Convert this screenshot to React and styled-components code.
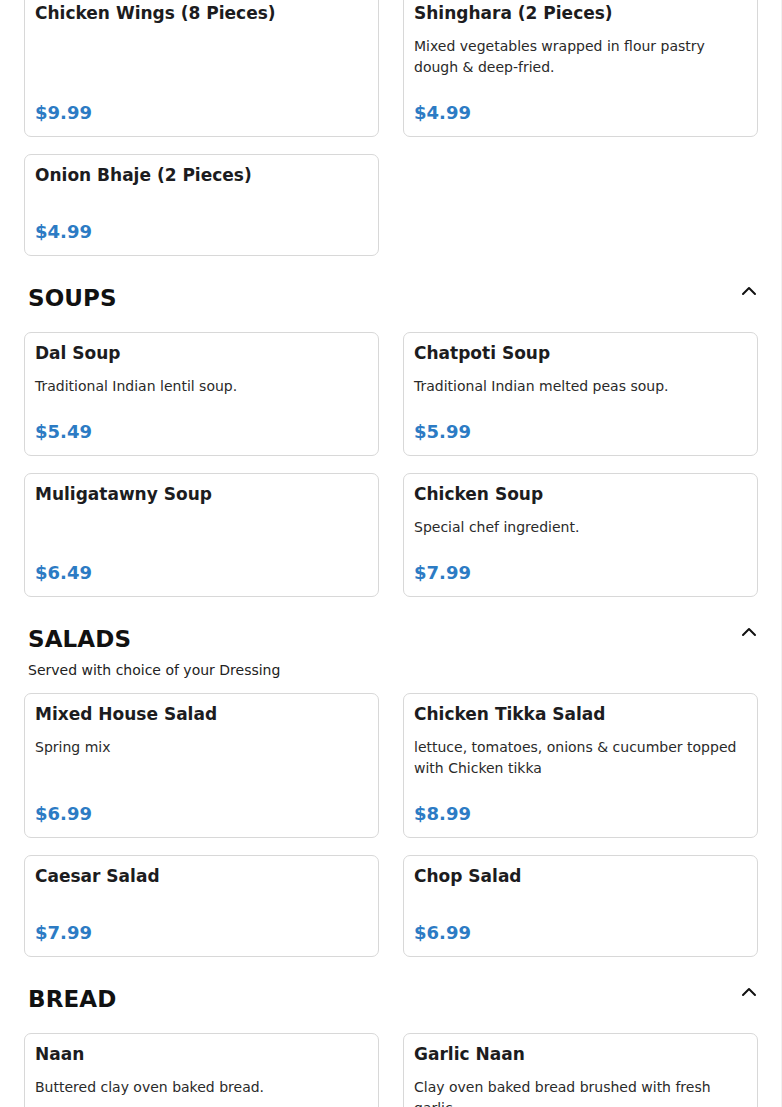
import React from 'react';
import styled, { createGlobalStyle } from 'styled-components';
import { ChevronUp } from 'lucide-react';

const GlobalStyle = createGlobalStyle`
  html, body {
    margin: 0;
    padding: 0;
    background: #fff;
    font-family: "DejaVu Sans", Verdana, sans-serif;
  }
  * { box-sizing: border-box; }
`;

const Page = styled.div`
  height: 100vh;
  overflow: hidden;
  border-right: 1px solid #f1f1f1;
`;

const Menu = styled.div`
  margin-top: -8px;
  padding: 0 23px 40px 24px;
`;

const Section = styled.section`
  margin-top: ${p => (p.first ? '0' : '23px')};
`;

const SectionHead = styled.div`
  display: flex;
  justify-content: space-between;
  align-items: flex-start;
  padding-left: 4px;
  margin-bottom: ${p => (p.hasNote ? '7px' : '20px')};
`;

const SectionTitle = styled.h2`
  margin: 0;
  padding-top: 6px;
  font-size: 23px;
  line-height: 27px;
  font-weight: 700;
  color: #111;
  letter-spacing: 0.1px;
`;

const Toggle = styled.span`
  display: flex;
  margin-right: -3px;
  color: #111;
`;

const SectionNote = styled.p`
  margin: 0 0 13px;
  padding-left: 4px;
  font-size: 14px;
  line-height: 20px;
  color: #222;
`;

const Grid = styled.div`
  display: grid;
  grid-template-columns: 1fr 1fr;
  column-gap: 24px;
  row-gap: 17px;
`;

const Card = styled.div`
  display: flex;
  flex-direction: column;
  border: 1px solid #d8d8d8;
  border-radius: 7px;
  padding: 10px 10px 12px;
  background: #fff;
`;

const ItemName = styled.h3`
  margin: 0 0 12px;
  font-size: 17px;
  line-height: 21px;
  font-weight: 700;
  color: #1c1c20;
`;

const ItemDesc = styled.p`
  margin: 0 0 1px;
  font-size: 14px;
  line-height: 21px;
  color: #2a2a2a;
`;

const Price = styled.div`
  margin-top: auto;
  padding-top: 23px;
  font-size: 18px;
  line-height: 22px;
  font-weight: 700;
  color: #2c7bc4;
`;

const sections = [
  {
    items: [
      { name: 'Chicken Wings (8 Pieces)', price: '9.99' },
      { name: 'Shinghara (2 Pieces)', desc: 'Mixed vegetables wrapped in flour pastry dough & deep-fried.', price: '4.99' },
      { name: 'Onion Bhaje (2 Pieces)', price: '4.99' },
    ],
  },
  {
    title: 'SOUPS',
    items: [
      { name: 'Dal Soup', desc: 'Traditional Indian lentil soup.', price: '5.49' },
      { name: 'Chatpoti Soup', desc: 'Traditional Indian melted peas soup.', price: '5.99' },
      { name: 'Muligatawny Soup', price: '6.49' },
      { name: 'Chicken Soup', desc: 'Special chef ingredient.', price: '7.99' },
    ],
  },
  {
    title: 'SALADS',
    note: 'Served with choice of your Dressing',
    items: [
      { name: 'Mixed House Salad', desc: 'Spring mix', price: '6.99' },
      { name: 'Chicken Tikka Salad', desc: 'lettuce, tomatoes, onions & cucumber topped with Chicken tikka', price: '8.99' },
      { name: 'Caesar Salad', price: '7.99' },
      { name: 'Chop Salad', price: '6.99' },
    ],
  },
  {
    title: 'BREAD',
    items: [
      { name: 'Naan', desc: 'Buttered clay oven baked bread.', price: '2.99' },
      { name: 'Garlic Naan', desc: 'Clay oven baked bread brushed with fresh garlic.', price: '3.99' },
    ],
  },
];

function MenuItem({ item }) {
  return (
    <Card>
      <ItemName>{item.name}</ItemName>
      {item.desc && <ItemDesc>{item.desc}</ItemDesc>}
      <Price>${item.price}</Price>
    </Card>
  );
}

export default function App() {
  return (
    <Page>
      <GlobalStyle />
      <Menu>
        {sections.map((s, i) => (
          <Section key={i} first={i === 0}>
            {s.title && (
              <>
                <SectionHead hasNote={!!s.note}>
                  <SectionTitle>{s.title}</SectionTitle>
                  <Toggle><ChevronUp size={24} strokeWidth={2} /></Toggle>
                </SectionHead>
                {s.note && <SectionNote>{s.note}</SectionNote>}
              </>
            )}
            <Grid>
              {s.items.map(item => <MenuItem key={item.name} item={item} />)}
            </Grid>
          </Section>
        ))}
      </Menu>
    </Page>
  );
}
